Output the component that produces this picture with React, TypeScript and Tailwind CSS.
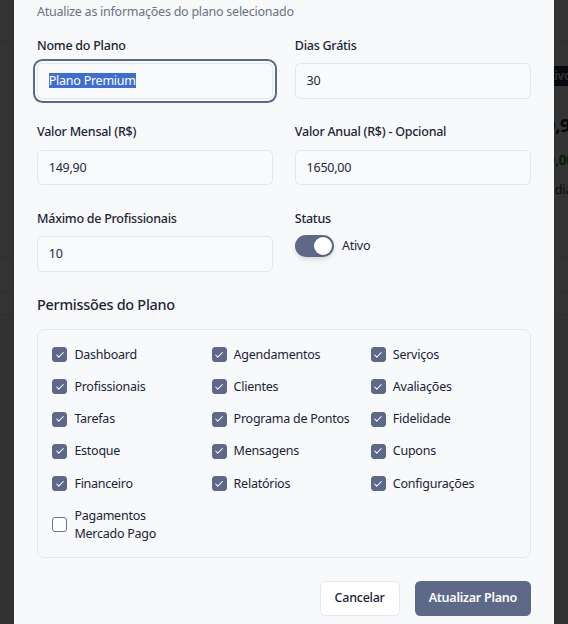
import React from 'react'

const perms: [string, boolean][] = [
  ['Dashboard', true], ['Agendamentos', true], ['Serviços', true],
  ['Profissionais', true], ['Clientes', true], ['Avaliações', true],
  ['Tarefas', true], ['Programa de Pontos', true], ['Fidelidade', true],
  ['Estoque', true], ['Mensagens', true], ['Cupons', true],
  ['Financeiro', true], ['Relatórios', true], ['Configurações', true],
  ['Pagamentos Mercado Pago', false],
]

function Field({label, children}:{label:string; children:React.ReactNode}) {
  return (
    <div>
      <div className="mb-[8.5px] font-medium leading-[18px] text-[#1c2433]">{label}</div>
      {children}
    </div>
  )
}

function TextInput({value}:{value:string}) {
  return (
    <input readOnly value={value}
      className="block h-[35.5px] w-full rounded-[5.4px] border border-[#e2e8f0] bg-[#f8fafc] px-[10.8px] text-[#1e293b] outline-none"/>
  )
}

function Perm({label, checked}:{label:string; checked:boolean}) {
  return (
    <div className="flex items-center gap-[7px]">
      <span className={`flex h-[15px] w-[15px] shrink-0 items-center justify-center rounded-[3px] border ${checked ? 'border-[#5e6989] bg-[#5e6989]' : 'border-[#6b7591] bg-white'}`}>
        {checked && (
          <svg viewBox="0 0 24 24" className="h-[10px] w-[10px]" fill="none" stroke="white" strokeWidth={2.5} strokeLinecap="round" strokeLinejoin="round">
            <path d="M20 6 9 17l-5-5"/>
          </svg>
        )}
      </span>
      <span className="leading-[18px] text-[#1c2433]">{label}</span>
    </div>
  )
}

export default function App() {
  return (
    <div className="relative h-screen w-full overflow-hidden font-['Noto_Sans','Open_Sans',sans-serif] text-[12.5px] tracking-[-0.25px]">
      {/* página por trás */}
      <div className="h-full bg-gray-50">
        <div className="h-[42px] border-b border-gray-200 bg-white"/>
        <div className="h-[216px] border-b border-gray-200 bg-white pt-[24px]">
          <div className="ml-[534px] inline-block rounded-md bg-slate-800 px-2 text-[12px] font-semibold leading-[20px] text-white">Ativo</div>
          <div className="ml-[499px] mt-[25px] text-[18px] font-bold leading-[28px] text-gray-900 whitespace-nowrap">R$ 149,90</div>
          <div className="ml-[504px] mt-[7px] text-[14px] font-semibold leading-[28px] text-green-700 whitespace-nowrap">R$ 1650,00</div>
          <div className="ml-[538px] mt-[6px] leading-[20px] text-gray-700 whitespace-nowrap">30 dias</div>
        </div>
        <div className="h-[34px] border-b border-gray-200 bg-white"/>
        <div className="h-[23px] border-b border-gray-200 bg-white"/>
      </div>
      <div className="absolute inset-0 bg-black/80"/>

      {/* diálogo */}
      <div className="absolute inset-0 flex justify-center">
        <div className="h-full w-[540px] overflow-hidden bg-[#f8f9fb] px-[23px] pt-[3px]">
          <p className="leading-[18px] text-[#6b7280]">Atualize as informações do plano selecionado</p>

          <div className="mt-[15.5px] grid grid-cols-2 gap-x-[21.6px] gap-y-[24.5px]">
            <Field label="Nome do Plano">
              <div className="flex h-[35.5px] items-center rounded-[5.4px] border border-[#e2e8f0] bg-[#f8fafc] px-[10.8px] ring-2 ring-[#5e6989] ring-offset-2 ring-offset-[#f8f9fb]">
                <span className="inline-block bg-[#3f6ed3] leading-[15px] text-white">Plano Premium</span>
              </div>
            </Field>
            <Field label="Dias Grátis"><TextInput value="30"/></Field>
            <Field label="Valor Mensal (R$)"><TextInput value="149,90"/></Field>
            <Field label="Valor Anual (R$) - Opcional"><TextInput value="1650,00"/></Field>
            <Field label="Máximo de Profissionais"><TextInput value="10"/></Field>
            <div>
              <div className="mb-[7.5px] font-medium leading-[18px] text-[#1c2433]">Status</div>
              <div className="flex items-center gap-[7.5px]">
                <span className="flex h-[21.6px] w-[39.6px] items-center justify-end rounded-full bg-[#5e6989] px-[2px] shadow-md">
                  <span className="h-[18px] w-[18px] rounded-full bg-white shadow"/>
                </span>
                <span className="leading-[18px] text-[#1c2433]">Ativo</span>
              </div>
            </div>
          </div>

          <div className="mt-[22.5px] text-[14.4px] font-medium leading-[21.6px] text-[#1c2433]">Permissões do Plano</div>
          <div className="mt-[13.8px] grid grid-cols-3 gap-x-[14.4px] gap-y-[14.2px] rounded-[7.2px] border border-[#e2e8f0] px-[14.4px] pt-[15.4px] pb-[14.4px]">
            {perms.map(([label, checked]) => <Perm key={label} label={label} checked={checked}/>)}
          </div>

          <div className="mt-[22.6px] flex justify-end gap-[15px]">
            <button className="h-[35.5px] rounded-[5.4px] border border-[#e2e8f0] bg-white px-[14px] font-medium text-[#1c2433]">Cancelar</button>
            <button className="h-[35.5px] rounded-[5.4px] bg-[#5e6989] px-[14px] font-semibold text-white">Atualizar Plano</button>
          </div>
        </div>
      </div>
    </div>
  )
}
